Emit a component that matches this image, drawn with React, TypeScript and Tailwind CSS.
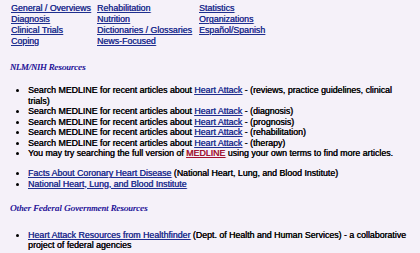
import React from "react";

const L = ({ children, red }: { children: React.ReactNode; red?: boolean }) => (
  <a href="#" className={red ? "text-[#a0102e] underline" : "text-[#1f2f8f] underline"}>
    {children}
  </a>
);

export default function App() {
  const topCols = [
    ["General / Overviews", "Diagnosis", "Clinical Trials", "Coping"],
    ["Rehabilitation", "Nutrition", "Dictionaries / Glossaries", "News-Focused"],
    ["Statistics", "Organizations", "Español/Spanish"],
  ];
  const searches = [
    "(reviews, practice guidelines, clinical trials)",
    "(diagnosis)",
    "(prognosis)",
    "(rehabilitation)",
    "(therapy)",
  ];
  const serif = { fontFamily: '"Liberation Serif", "Times New Roman", serif' };
  return (
    <div
      className="w-[420px] h-[253px] overflow-hidden bg-[#f5f1f9] text-black [text-shadow:0.35px_0_0_currentColor]"
      style={{ fontFamily: '"Liberation Sans", Arial, sans-serif' }}
    >
      <div className="flex pl-[11px] pt-[3px] text-[8.8px] leading-[11px] whitespace-nowrap">
        <div className="flex flex-col items-start w-[86px]">
          {topCols[0].map((t) => (
            <L key={t}>{t}</L>
          ))}
        </div>
        <div className="flex flex-col items-start w-[102px]">
          {topCols[1].map((t) => (
            <L key={t}>{t}</L>
          ))}
        </div>
        <div className="flex flex-col items-start">
          {topCols[2].map((t) => (
            <L key={t}>{t}</L>
          ))}
        </div>
      </div>

      <div className="pl-[10px] mt-[13.5px] italic text-[9px] text-[#2a1a9a] leading-[12px]" style={serif}>
        NLM/NIH Resources
      </div>

      <ul className="mt-[12.5px] pl-[28px] pr-[10px] text-[8.8px] leading-[10.5px] list-disc">
        {searches.map((s) => (
          <li key={s}>
            Search MEDLINE for recent articles about <L>Heart Attack</L> - {s}
          </li>
        ))}
        <li>
          You may try searching the full version of <L red>MEDLINE</L> using your own terms to find more articles.
        </li>
      </ul>

      <ul className="mt-[9.5px] pl-[28px] pr-[10px] text-[8.8px] leading-[10.5px] list-disc">
        <li>
          <L>Facts About Coronary Heart Disease</L> (National Heart, Lung, and Blood Institute)
        </li>
        <li>
          <L>National Heart, Lung, and Blood Institute</L>
        </li>
      </ul>

      <div className="pl-[10px] mt-[13px] italic text-[9px] text-[#2a1a9a] leading-[12px]" style={serif}>
        Other Federal Government Resources
      </div>

      <ul className="mt-[15.5px] pl-[28px] pr-[10px] text-[8.8px] leading-[10.5px] list-disc">
        <li>
          <L>Heart Attack Resources from Healthfinder</L> (Dept. of Health and Human Services) - a collaborative
          project of federal agencies
        </li>
      </ul>
    </div>
  );
}
